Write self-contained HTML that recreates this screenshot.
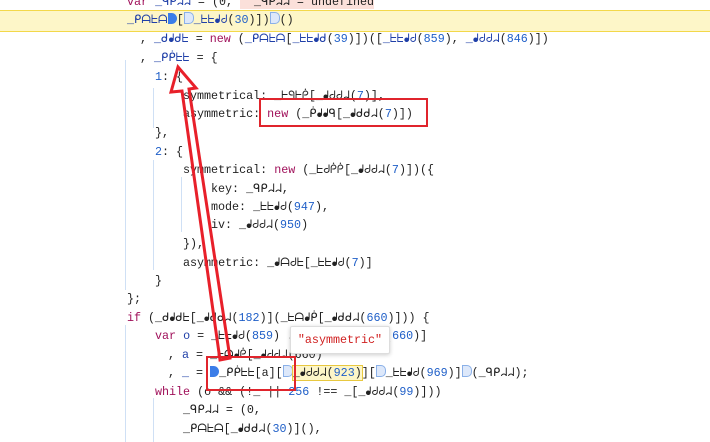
<!DOCTYPE html><html><head><meta charset="utf-8"><style>
body{margin:0;width:710px;height:442px;overflow:hidden;background:#fff;position:relative;font-family:"Liberation Mono","DejaVu Sans Mono",monospace;font-size:11.7px;color:#222}
.l{position:absolute;white-space:pre;height:19px;line-height:19px}
.k{color:#a0105a}.n{color:#1f5fc8}.v{color:#1f3fa8}.s{color:#d02020}
.g{position:absolute;width:1px;background:#cfe0f5}
.hl{position:absolute;left:0;top:10px;width:710px;height:20px;background:#fdf6c8;border-top:1px solid #f3d84a;border-bottom:1px solid #f3d84a}
.bx{position:absolute;border:2px solid #e0242c}
.bp{display:inline-block;width:9px;height:11px;background:#3b7de8;border-radius:0 6px 6px 0;vertical-align:-1px}
.bh{display:inline-block;width:8px;height:10px;border:1px solid #8ab0e8;background:#dde8fa;border-radius:0 5px 5px 0;vertical-align:-1px}
</style></head><body>
<div class="hl"></div>
<div class="g" style="left:125px;top:60px;height:230px"></div>
<div class="g" style="left:153px;top:88px;height:40px"></div>
<div class="g" style="left:153px;top:160px;height:110px"></div>
<div class="g" style="left:181px;top:177px;height:55px"></div>
<div class="g" style="left:125px;top:325px;height:117px"></div>
<div class="g" style="left:153px;top:398px;height:44px"></div>
<div class="l" style="left:127px;top:-7px"><span class="k">var</span> <span class="v">_ᑫᑭᖹᖹ</span> = (0, <span style="background:#fbe0da">  _ᑫᑭᖹᖹ = undefined</span></div>
<div class="l" style="left:127px;top:11px"><span class="v">_ᑭᗩᖶᗩ</span><span class="bp"></span>[<span class="bh"></span><span class="v">_ᖶᖶᖱᑯ</span>(<span class="n">30</span>)])<span class="bh"></span>()</div>
<div class="l" style="left:140px;top:30px">, <span class="v">_ᑯᖱᑯᖶ</span> = <span class="k">new</span> (<span class="v">_ᑭᗩᖶᗩ</span>[<span class="v">_ᖶᖶᖱᑯ</span>(<span class="n">39</span>)])([<span class="v">_ᖶᖶᖱᑯ</span>(<span class="n">859</span>), <span class="v">_ᖱᑯᑯᖹ</span>(<span class="n">846</span>)])</div>
<div class="l" style="left:140px;top:49px">, <span class="v">_ᑭᑮᖶᖶ</span> = {</div>
<div class="l" style="left:155px;top:68px"><span class="n">1</span>: {</div>
<div class="l" style="left:183px;top:87px">symmetrical: _ᖶᑫᖶᑮ[_ᖱᑯᑯᖹ(<span class="n">7</span>)],</div>
<div class="l" style="left:183px;top:105px">asymmetric: <span class="k">new</span> (_ᑮᖱᖱᑫ[_ᖱᑯᑯᖹ(<span class="n">7</span>)])</div>
<div class="l" style="left:155px;top:124px">},</div>
<div class="l" style="left:155px;top:143px"><span class="n">2</span>: {</div>
<div class="l" style="left:183px;top:161px">symmetrical: <span class="k">new</span> (_ᖶᑯᑮᑮ[_ᖱᑯᑯᖹ(<span class="n">7</span>)])({</div>
<div class="l" style="left:211px;top:180px">key: _ᑫᑭᖹᖹ,</div>
<div class="l" style="left:211px;top:198px">mode: _ᖶᖶᖱᑯ(<span class="n">947</span>),</div>
<div class="l" style="left:211px;top:216px">iv: _ᖱᑯᑯᖹ(<span class="n">950</span>)</div>
<div class="l" style="left:183px;top:235px">}),</div>
<div class="l" style="left:183px;top:254px">asymmetric: _ᖱᗩᑯᖶ[_ᖶᖶᖱᑯ(<span class="n">7</span>)]</div>
<div class="l" style="left:155px;top:272px">}</div>
<div class="l" style="left:127px;top:290px">};</div>
<div class="l" style="left:127px;top:309px"><span class="k">if</span> (_ᑯᖱᑯᖶ[_ᖱᑯᑯᖹ(<span class="n">182</span>)](_ᖶᗩᖱᑮ[_ᖱᑯᑯᖹ(<span class="n">660</span>)])) {</div>
<div class="l" style="left:155px;top:327px"><span class="k">var</span> <span class="v">o</span> = _ᖶᖶᖱᑯ(<span class="n">859</span>) ...        ᑯᑯᖹ(<span class="n">660</span>)]</div>
<div class="l" style="left:168px;top:346px">, <span class="v">a</span> = _ᖶᗩᖱᑮ[_ᖱᑯᑯᖹ(660)</div>
<div class="l" style="left:168px;top:364px">, <span class="v">_</span> = <span class="bp"></span>_ᑭᑮᖶᖶ[a][<span class="bh"></span><span style="background:#fdf6c8;outline:1px solid #e8c840">_ᖱᑯᑯᖹ(<span class="n">923</span>)</span>][<span class="bh"></span>_ᖶᖶᖱᑯ(<span class="n">969</span>)]<span class="bh"></span>(_ᑫᑭᖹᖹ);</div>
<div class="l" style="left:155px;top:383px"><span class="k">while</span> (o &amp;&amp; (!_ || <span class="n">256</span> !== _[_ᖱᑯᑯᖹ(<span class="n">99</span>)]))</div>
<div class="l" style="left:183px;top:401px">_ᑫᑭᖹᖹ = (0,</div>
<div class="l" style="left:183px;top:420px">_ᑭᗩᖶᗩ[_ᖱᑯᑯᖹ(<span class="n">30</span>)](),</div>
<div style="position:absolute;left:290px;top:326px;width:98px;height:26px;background:#fff;border:1px solid #ddd;box-shadow:0 1px 4px rgba(0,0,0,.2);border-radius:2px;font-size:11.7px;line-height:26px;text-align:center" class="s">"asymmetric"</div>
<div class="bx" style="left:259px;top:98px;width:165px;height:25px"></div>
<div class="bx" style="left:206px;top:356px;width:86px;height:31px"></div>
<svg style="position:absolute;left:0;top:0" width="710" height="442"><polygon points="178,67 196,88 189,89 230,358 220,360 182,91 171,92" fill="none" stroke="#e8202a" stroke-width="3" stroke-linejoin="miter"/></svg>
</body></html>
